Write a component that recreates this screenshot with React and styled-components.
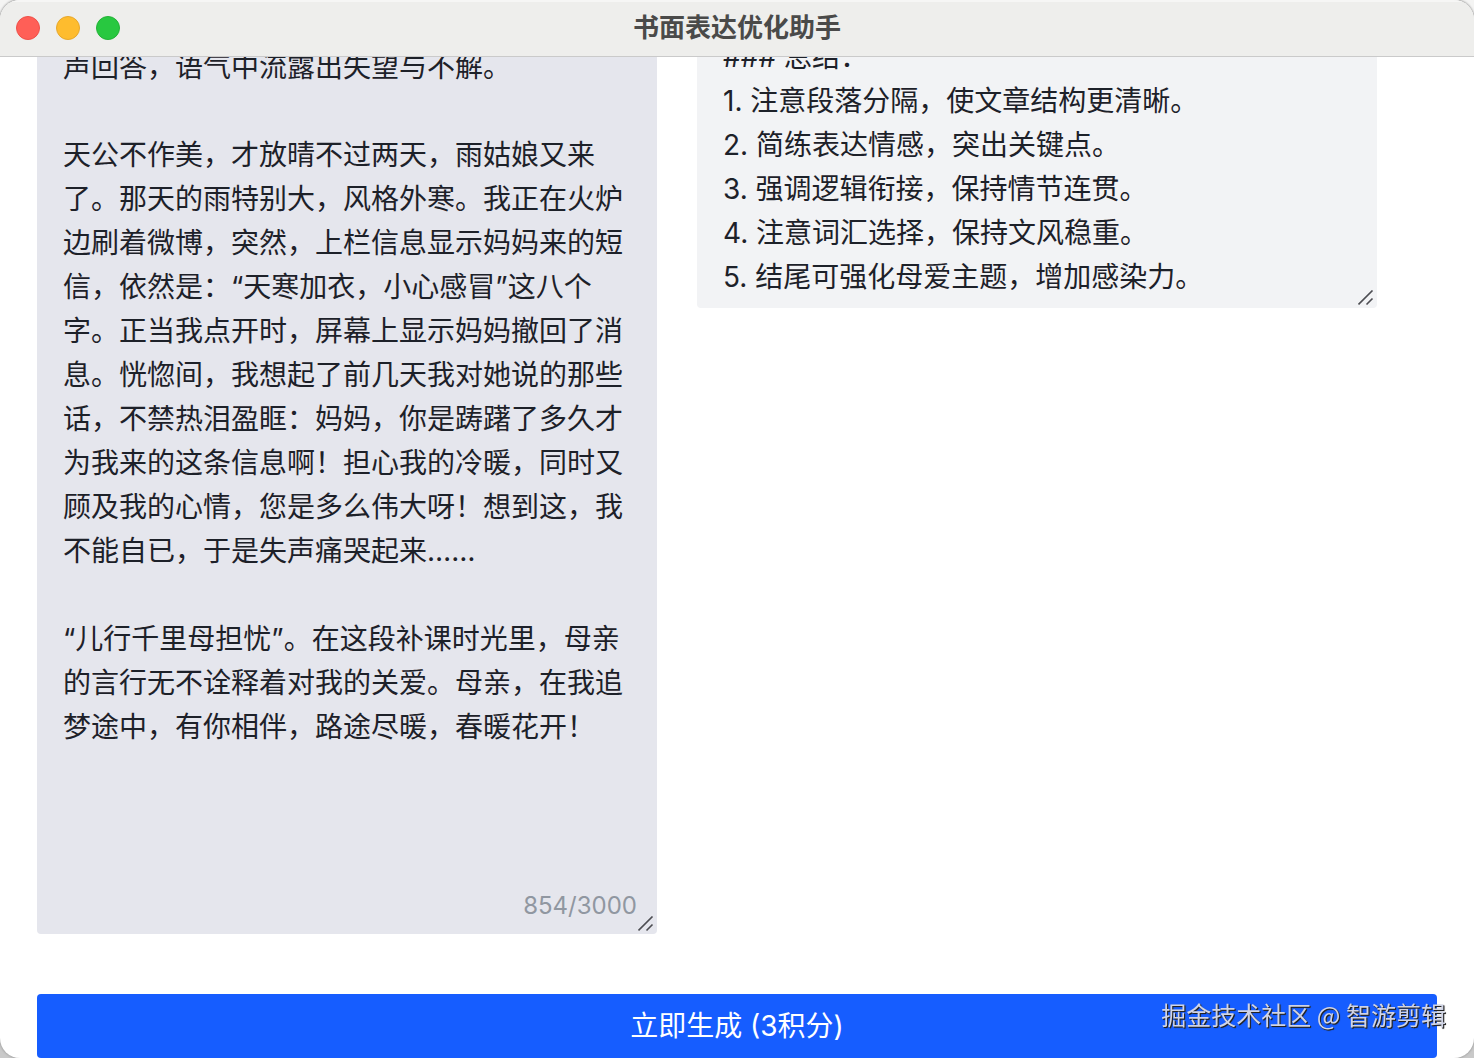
import React, { useState } from "react";
import styled, { createGlobalStyle } from "styled-components";

const GlobalStyle = createGlobalStyle`
  *, *::before, *::after { box-sizing: border-box; }
  body {
    margin: 0;
    background: linear-gradient(#f4f4f3 50%, #c9c9c9 50%);
    font-family: Inter, "Noto Sans CJK SC", sans-serif;
    color: #1d2129;
  }
  textarea, button { font-family: inherit; }
`;

const Window = styled.div`
  display: flex;
  flex-direction: column;
  height: 100vh;
  overflow: hidden;
  background: #fff;
  border-radius: 20px;
  box-shadow: 0 0 2px 1px #a8a8a8;
`;

const TitleBar = styled.header`
  position: relative;
  display: grid;
  grid-template-columns: 1fr auto 1fr;
  align-items: center;
  flex: none;
  height: 57px;
  padding: 0 16px;
  background: #eeeeec;
  border-bottom: 1px solid #cacaca;
  box-shadow: inset 0 2px 0 #f6f6f5;
`;

const Lights = styled.div`
  display: flex;
  gap: 16px;
`;

const Light = styled.button`
  width: 24px;
  height: 24px;
  padding: 0;
  border: 1px solid ${(p) => p.$edge};
  border-radius: 50%;
  background: ${(p) => p.$color};
`;

const Title = styled.h1`
  margin: 0;
  font-size: 26px;
  line-height: 32px;
  font-weight: 700;
  color: #4a4a49;
`;

const Viewport = styled.main`
  display: flex;
  flex-direction: column;
  justify-content: flex-end;
  flex: 1;
  min-height: 0;
  overflow: hidden;
  padding: 0 37px;
`;

const Form = styled.form`
  display: flex;
  flex: none;
  flex-direction: column;
  gap: 60px;
`;

const Columns = styled.div`
  display: grid;
  grid-template-columns: 31fr 34fr;
  align-items: start;
  gap: 40px;
  padding-right: 60px;
`;

const Field = styled.div`
  position: relative;
  display: flex;
`;

const TextArea = styled.textarea`
  display: block;
  width: 100%;
  padding: ${(p) => (p.$filled ? "18px" : "8px")} 26px 9px;
  border: 0;
  border-radius: 4px;
  outline: 0;
  resize: none;
  overflow: hidden;
  background: ${(p) => (p.$filled ? "#e5e6ed" : "#f2f3f5")};
  color: #1d2129;
  font-size: 28px;
  line-height: 44px;
`;

const Counter = styled.span`
  position: absolute;
  right: 20px;
  bottom: 12px;
  color: #9097a1;
  font-size: 24px;
  line-height: 32px;
`;

const Grip = styled.svg`
  position: absolute;
  right: 3px;
  bottom: 2px;
  width: 16px;
  height: 16px;
  stroke: #4c4d52;
  stroke-width: 1.6;
`;

const Submit = styled.button`
  height: 64px;
  border: 0;
  border-radius: 4px;
  background: #165dff;
  color: #fff;
  font-size: 28px;
  line-height: 44px;
`;

const Watermark = styled.div`
  position: fixed;
  right: 28px;
  bottom: 26px;
  color: #d0d4e6;
  font-family: "Noto Sans CJK SC", sans-serif;
  font-size: 25px;
  line-height: 36px;
  text-shadow: 1px 1px 1px #222, 1px 1px 0 #333;
  pointer-events: none;
`;

const essay = `声回答，语气中流露出失望与不解。

天公不作美，才放晴不过两天，雨姑娘又来了。那天的雨特别大，风格外寒。我正在火炉边刷着微博，突然，上栏信息显示妈妈来的短信，依然是：“天寒加衣，小心感冒”这八个字。正当我点开时，屏幕上显示妈妈撤回了消息。恍惚间，我想起了前几天我对她说的那些话，不禁热泪盈眶：妈妈，你是踌躇了多久才为我来的这条信息啊！担心我的冷暖，同时又顾及我的心情，您是多么伟大呀！想到这，我不能自已，于是失声痛哭起来……

“儿行千里母担忧”。在这段补课时光里，母亲的言行无不诠释着对我的关爱。母亲，在我追梦途中，有你相伴，路途尽暖，春暖花开！`;

const summary = `### 总结：
1. 注意段落分隔，使文章结构更清晰。
2. 简练表达情感，突出关键点。
3. 强调逻辑衔接，保持情节连贯。
4. 注意词汇选择，保持文风稳重。
5. 结尾可强化母爱主题，增加感染力。`;

const ResizeGrip = () => (
  <Grip viewBox="0 0 16 16" aria-hidden="true">
    <path d="M0.500 14.500 14.500 0.500M8.500 14.500 14.500 8.500" />
  </Grip>
);

export default function App() {
  const [text, setText] = useState(essay);
  return (
    <>
      <GlobalStyle />
      <Window>
        <TitleBar>
          <Lights>
            <Light type="button" aria-label="关闭" $color="#ff5f57" $edge="#ee5049" />
            <Light type="button" aria-label="最小化" $color="#febc2e" $edge="#e6a72c" />
            <Light type="button" aria-label="缩放" $color="#28c840" $edge="#23b237" />
          </Lights>
          <Title>书面表达优化助手</Title>
        </TitleBar>
        <Viewport>
          <Form onSubmit={(e) => e.preventDefault()}>
            <Columns>
              <Field>
                <TextArea
                  $filled
                  rows={20}
                  lang="zh-CN"
                  aria-label="原文"
                  spellCheck={false}
                  value={text}
                  onChange={(e) => setText(e.target.value)}
                />
                <Counter>854/3000</Counter>
                <ResizeGrip />
              </Field>
              <Field>
                <TextArea rows={6} lang="zh-CN" aria-label="优化建议" spellCheck={false} readOnly value={summary} />
                <ResizeGrip />
              </Field>
            </Columns>
            <Submit type="submit">立即生成 (3积分)</Submit>
          </Form>
        </Viewport>
      </Window>
      <Watermark>掘金技术社区 @ 智游剪辑</Watermark>
    </>
  );
}
